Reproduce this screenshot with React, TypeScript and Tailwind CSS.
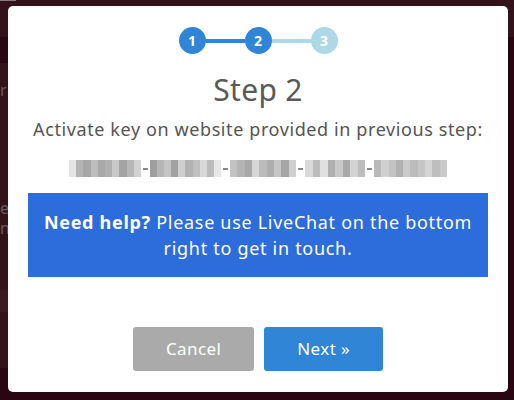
import React from 'react'

const keySegments: { w: number; shades: string[] }[] = [
  { w: 72, shades: ['#e4e4e4', '#b4b4b4', '#a6a6a6', '#bdbdbd', '#a9a9a9', '#b0b0b0', '#c8c8c8', '#a4a4a4', '#b8b8b8', '#d2d2d2'] },
  { w: 71, shades: ['#9e9e9e', '#b6b6b6', '#c4c4c4', '#a2a2a2', '#cfcfcf', '#b2b2b2', '#c0c0c0', '#d8d8d8', '#bcbcbc', '#e6e6e6'] },
  { w: 66, shades: ['#c2c2c2', '#b4b4b4', '#a8a8a8', '#d6d6d6', '#bcbcbc', '#aeaeae', '#c6c6c6', '#a6a6a6', '#cfcfcf'] },
  { w: 60, shades: ['#d9d9d9', '#bcbcbc', '#e0e0e0', '#b0b0b0', '#c9c9c9', '#a9a9a9', '#d3d3d3', '#bdbdbd'] },
  { w: 73, shades: ['#b9b9b9', '#d0d0d0', '#c3c3c3', '#b1b1b1', '#cacaca', '#bcbcbc', '#c6c6c6', '#d4d4d4', '#bebebe', '#c9c9c9'] },
]

// the licence key is pixelated in the screenshot
function BlurredKey() {
  return (
    <div className="flex items-center h-[17px] blur-[0.6px]">
      {keySegments.map((seg, i) => (
        <div key={i} className="flex items-center">
          {i > 0 && <span className="mx-[2px] h-[2px] w-[5px] bg-[#8a8a8a]" />}
          <div className="flex h-[17px]" style={{ width: seg.w }}>
            {seg.shades.map((c, j) => (
              <span key={j} className="flex-1 h-full" style={{ backgroundColor: c }} />
            ))}
          </div>
        </div>
      ))}
    </div>
  )
}

function StepDot({ n, active }: { n: number; active: boolean }) {
  return (
    <div
      className={`flex h-[27px] w-[27px] items-center justify-center rounded-full text-[14px] font-bold text-white ${active ? 'bg-[#3085d6]' : 'bg-[#add8e6]'}`}
    >
      {n}
    </div>
  )
}

export default function App() {
  return (
    <div
      className="relative h-[400px] w-[514px] overflow-hidden bg-[#2a0612]"
      style={{ fontFamily: '"Noto Sans", "Liberation Sans", sans-serif' }}
    >
      {/* page behind the backdrop */}
      <div className="flex h-[37px] bg-[#33121b]">
        <div className="h-[1px] w-[16px] bg-[#8a7a7e]" />
        <div className="flex-1" />
      </div>
      <div className="flex">
        <div className="w-[8px] flex flex-col">
          <div className="h-[26px] bg-[#2a0612]" />
          <div className="h-[227px] bg-[#33121b] text-[16px] leading-[20px] text-[#6b5a5e] overflow-hidden">
            <div className="mt-[17px]">r</div>
            <div className="mt-[98px]">e</div>
            <div>n</div>
          </div>
          <div className="h-[10px] bg-[#3a1a23]" />
          <div className="h-[12px] bg-[#3a1a23]" />
          <div className="h-[56px] bg-[#33121b]" />
        </div>
      </div>

      {/* modal */}
      <div className="absolute left-[8px] top-[6px] flex h-[386px] w-[500px] flex-col items-center rounded-[5px] bg-white px-5 pt-[21px]">
        <div className="flex items-center">
          <StepDot n={1} active />
          <div className="h-[4px] w-[39px] bg-[#3085d6]" />
          <StepDot n={2} active />
          <div className="h-[4px] w-[39px] bg-[#add8e6]" />
          <StepDot n={3} active={false} />
        </div>

        <h2 className="mt-[18px] text-[30px] leading-[36px] tracking-[0.3px] text-[#595959]">Step 2</h2>

        <p className="mt-[8px] text-[18px] leading-[26px] tracking-[0.6px] text-[#545454]">
          Activate key on website provided in previous step:
        </p>

        <div className="mt-[18px]">
          <BlurredKey />
        </div>

        <div className="mt-[16px] w-full bg-[#2d6cdb] px-2 py-[16px] text-center text-[18px] leading-[26px] tracking-[0.7px] text-white">
          <b className="font-bold">Need help?</b> Please use LiveChat on the bottom
          <br />
          right to get in touch.
        </div>

        <div className="mt-[50px] flex gap-[10px]">
          <button className="h-[44px] rounded-[3px] bg-[#aaaaaa] px-[33px] text-[17px] tracking-[0.4px] text-white">Cancel</button>
          <button className="h-[44px] rounded-[3px] bg-[#3085d6] px-[33px] text-[17px] tracking-[0.4px] text-white">Next »</button>
        </div>
      </div>
    </div>
  )
}
